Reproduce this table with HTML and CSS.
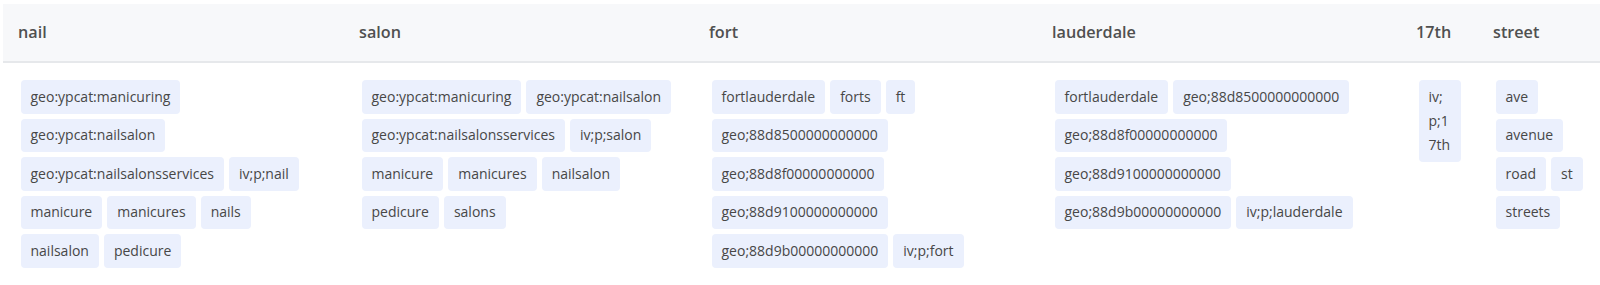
FILE: index.html
```html
<!DOCTYPE html>
<html lang="en">
<head>
<meta charset="utf-8">
<title>Token expansions</title>
<link rel="stylesheet" href="styles.css">
</head>
<body>
<div class="page">
  <table class="terms">
    <colgroup>
      <col class="c-nail">
      <col class="c-salon">
      <col class="c-fort">
      <col class="c-lauderdale">
      <col class="c-17th">
      <col class="c-street">
    </colgroup>
    <thead>
      <tr>
        <th>nail</th>
        <th>salon</th>
        <th>fort</th>
        <th>lauderdale</th>
        <th>17th</th>
        <th>street</th>
      </tr>
    </thead>
    <tbody>
      <tr>
        <td>
          <div class="tags">
            <span class="tag">geo:ypcat:manicuring</span>
            <span class="tag">geo:ypcat:nailsalon</span>
            <span class="tag">geo:ypcat:nailsalonsservices</span>
            <span class="tag">iv;p;nail</span>
            <span class="tag">manicure</span>
            <span class="tag">manicures</span>
            <span class="tag">nails</span>
            <span class="tag">nailsalon</span>
            <span class="tag">pedicure</span>
          </div>
        </td>
        <td>
          <div class="tags">
            <span class="tag">geo:ypcat:manicuring</span>
            <span class="tag">geo:ypcat:nailsalon</span>
            <span class="tag">geo:ypcat:nailsalonsservices</span>
            <span class="tag">iv;p;salon</span>
            <span class="tag">manicure</span>
            <span class="tag">manicures</span>
            <span class="tag">nailsalon</span>
            <span class="tag">pedicure</span>
            <span class="tag">salons</span>
          </div>
        </td>
        <td>
          <div class="tags">
            <span class="tag">fortlauderdale</span>
            <span class="tag">forts</span>
            <span class="tag">ft</span>
            <span class="tag">geo;88d8500000000000</span>
            <span class="tag">geo;88d8f00000000000</span>
            <span class="tag">geo;88d9100000000000</span>
            <span class="tag">geo;88d9b00000000000</span>
            <span class="tag">iv;p;fort</span>
          </div>
        </td>
        <td>
          <div class="tags">
            <span class="tag">fortlauderdale</span>
            <span class="tag">geo;88d8500000000000</span>
            <span class="tag">geo;88d8f00000000000</span>
            <span class="tag">geo;88d9100000000000</span>
            <span class="tag">geo;88d9b00000000000</span>
            <span class="tag">iv;p;lauderdale</span>
          </div>
        </td>
        <td>
          <div class="tags">
            <span class="tag">iv;p;17th</span>
          </div>
        </td>
        <td>
          <div class="tags">
            <span class="tag">ave</span>
            <span class="tag">avenue</span>
            <span class="tag">road</span>
            <span class="tag">st</span>
            <span class="tag">streets</span>
          </div>
        </td>
      </tr>
    </tbody>
  </table>
</div>
</body>
</html>
```

FILE: styles.css
```css
html, body {
  margin: 0;
  padding: 0;
  background: #ffffff;
}

body {
  font-family: "Open Sans", "Noto Sans", "Liberation Sans", sans-serif;
  color: #444444;
}

.page {
  padding: 4px 0 0 3px;
}

.terms {
  width: 1597px;
  table-layout: fixed;
  border-collapse: separate;
  border-spacing: 0;
}

.c-nail { width: 341px; }
.c-salon { width: 350px; }
.c-fort { width: 343px; }
.c-lauderdale { width: 364px; }
.c-17th { width: 77px; }
.c-street { width: 122px; }

.terms th {
  background: #f7f8fa;
  border-bottom: 2px solid #e6e8eb;
  padding: 16px 15px;
  text-align: left;
  font-size: 16.2px;
  font-weight: 600;
  line-height: 25px;
  color: #505050;
}

.terms td {
  padding: 14.5px 15px 0 15px;
  vertical-align: top;
}

.terms td:last-child {
  padding-right: 8px;
}

.tags {
  display: flex;
  flex-wrap: wrap;
  align-items: flex-start;
}

.tag {
  margin: 2.5px;
  padding: 4.75px 10px;
  line-height: 24px;
  font-size: 14px;
  color: #474747;
  background: #ebf0fd;
  border-radius: 4px;
  word-break: break-all;
}
```
